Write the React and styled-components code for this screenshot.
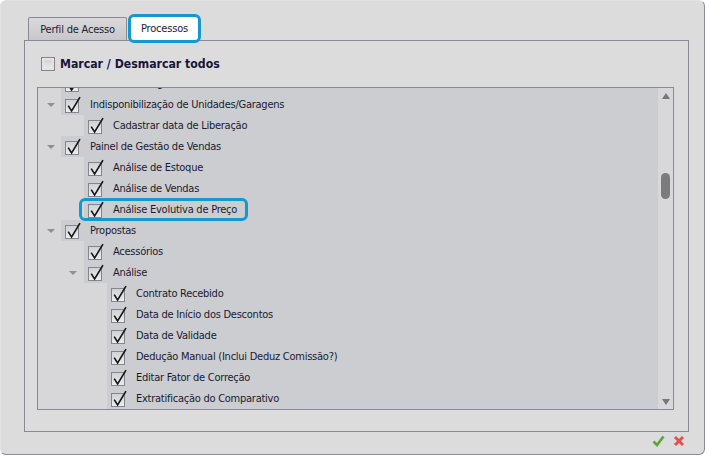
import React from "react";
import styled, { createGlobalStyle, css } from "styled-components";

const GlobalStyle = createGlobalStyle`
  body {
    margin: 0;
    background: #fff;
    font-family: "DejaVu Sans Condensed", "DejaVu Sans", sans-serif;
  }
`;

const Window = styled.div`
  box-sizing: border-box;
  width: 705px;
  height: 455px;
  display: flex;
  flex-direction: column;
  padding: 0 16px 0 23px;
  background: #dcdcdc;
  border-radius: 6px;
  border: 1px solid #e2e2e2;
  border-right-color: #8b8b98;
  border-bottom-color: #8b8b98;
`;

const TabBar = styled.div`
  display: flex;
  align-items: flex-start;
  gap: 1px;
  height: 23px;
  margin-top: 16px;
  padding-left: 4px;
`;

const Tab = styled.div`
  box-sizing: border-box;
  display: flex;
  align-items: center;
  justify-content: center;
  font-size: 11px;
  letter-spacing: -0.2px;
  color: #1c1c33;
  ${(p) =>
    p.$active
      ? css`
          position: relative;
          z-index: 2;
          margin-top: -3px;
          width: 73px;
          height: 29px;
          background: #fff;
          border: 3px solid #1697cf;
          border-radius: 6px;
        `
      : css`
          width: 99px;
          height: 23px;
          padding-top: 1px;
          background: linear-gradient(#d9d9db, #c8c8cb);
          border: 1px solid #8a8a97;
          border-bottom: none;
          border-radius: 2px 2px 0 0;
        `}
`;

const Panel = styled.div`
  box-sizing: border-box;
  width: 665px;
  height: 392px;
  display: flex;
  flex-direction: column;
  padding: 0 14px 21px 12px;
  border: 1px solid #8a8a97;
`;

const Header = styled.label`
  height: 46px;
  display: flex;
  align-items: center;
  gap: 5px;
  padding-left: 4px;
  font-weight: bold;
  font-size: 12.2px;
  color: #16163a;
`;

const BoxIcon = styled.span`
  box-sizing: border-box;
  width: 14px;
  height: 14px;
  border: 1px solid #85858f;
  background: linear-gradient(#cfcfd2, #ededee);
  box-shadow: inset 0 0 0 2px #e4e4e6;
`;

const TreeBox = styled.div`
  flex: 1;
  display: flex;
  border: 1px solid #8a8a97;
  background: #cccdd0;
  overflow: hidden;
`;

const List = styled.div`
  flex: 1;
  margin-top: -15px;
`;

const Row = styled.div`
  display: flex;
  height: 21px;
`;

const Indent = styled.div`
  flex: none;
  width: ${(p) => p.$level * 23 + 23}px;
  background: #d7d7d9;
  display: flex;
  justify-content: flex-end;
  align-items: center;
`;

const Arrow = styled.span`
  width: 23px;
  display: flex;
  justify-content: center;
  padding-left: 2px;
  &::before {
    content: "";
    border-left: 4px solid transparent;
    border-right: 4px solid transparent;
    border-top: 4px solid #8e8e96;
  }
`;

const Cell = styled.div`
  flex: 1;
  display: flex;
  align-items: center;
  padding-left: 4px;
`;

const Label = styled.span`
  position: relative;
  height: 21px;
  display: inline-flex;
  align-items: center;
  gap: 9px;
  font-size: 11px;
  letter-spacing: -0.25px;
  color: #1a1a30;
  white-space: nowrap;
  ${(p) =>
    p.$highlight &&
    css`
      &::after {
        content: "";
        position: absolute;
        inset: -1px -11px -1px -9px;
        border: 3px solid #1697cf;
        border-radius: 6px;
      }
    `}
`;

const ScrollBar = styled.div`
  flex: none;
  width: 15px;
  background: #d8d8da;
  display: flex;
  flex-direction: column;
  align-items: center;
  padding: 5px 0 4px;
  box-sizing: border-box;
`;

const ScrollArrow = styled.span`
  border-left: 4.5px solid transparent;
  border-right: 4.5px solid transparent;
  ${(p) =>
    p.$down
      ? css`
          border-top: 6px solid #777;
          margin-top: auto;
        `
      : css`
          border-bottom: 6px solid #777;
        `}
`;

const Thumb = styled.span`
  width: 9px;
  height: 26px;
  margin-top: 74px;
  border-radius: 5px;
  background: #7b7b7e;
`;

const Footer = styled.div`
  width: 665px;
  display: flex;
  justify-content: flex-end;
  gap: 8px;
  padding: 3px 4px 0 0;
  box-sizing: border-box;
`;

function Check() {
  return (
    <svg width="16" height="18" viewBox="0 0 16 18">
      <defs>
        <linearGradient id="cb" x1="0" y1="0" x2="0" y2="1">
          <stop offset="0" stopColor="#cfd0d3" />
          <stop offset="1" stopColor="#eeeeef" />
        </linearGradient>
      </defs>
      <rect x="0.5" y="3.5" width="13" height="13" fill="url(#cb)" stroke="#85858f" />
      <path d="M3.2 9.6 L6.6 15 L15 1.2" fill="none" stroke="#151515" strokeWidth="1.6" />
    </svg>
  );
}

const items = [
  { level: 0, label: "Reserva de Vagas", open: true },
  { level: 0, label: "Indisponibilização de Unidades/Garagens", open: true },
  { level: 1, label: "Cadastrar data de Liberação" },
  { level: 0, label: "Painel de Gestão de Vendas", open: true },
  { level: 1, label: "Análise de Estoque" },
  { level: 1, label: "Análise de Vendas" },
  { level: 1, label: "Análise Evolutiva de Preço", highlight: true },
  { level: 0, label: "Propostas", open: true },
  { level: 1, label: "Acessórios" },
  { level: 1, label: "Análise", open: true },
  { level: 2, label: "Contrato Recebido" },
  { level: 2, label: "Data de Início dos Descontos" },
  { level: 2, label: "Data de Validade" },
  { level: 2, label: "Dedução Manual (Inclui Deduz Comissão?)" },
  { level: 2, label: "Editar Fator de Correção" },
  { level: 2, label: "Extratificação do Comparativo" },
];

export default function App() {
  return (
    <>
      <GlobalStyle />
      <Window>
        <TabBar>
          <Tab>Perfil de Acesso</Tab>
          <Tab $active>Processos</Tab>
        </TabBar>
        <Panel>
          <Header>
            <BoxIcon />
            Marcar / Desmarcar todos
          </Header>
          <TreeBox>
            <List>
              {items.map((it, i) => (
                <Row key={i}>
                  <Indent $level={it.level}>
                    {it.open && <Arrow />}
                  </Indent>
                  <Cell>
                    <Label $highlight={it.highlight}>
                      <Check />
                      {it.label}
                    </Label>
                  </Cell>
                </Row>
              ))}
            </List>
            <ScrollBar>
              <ScrollArrow />
              <Thumb />
              <ScrollArrow $down />
            </ScrollBar>
          </TreeBox>
        </Panel>
        <Footer>
          <svg width="13" height="12" viewBox="0 0 13 12">
            <path d="M1.5 6.5 L5 10 L11.5 1.5" fill="none" stroke="#5aa636" strokeWidth="2.6" />
          </svg>
          <svg width="12" height="12" viewBox="0 0 12 12">
            <path d="M2 2 L10 10 M10 2 L2 10" fill="none" stroke="#e25050" strokeWidth="3" />
          </svg>
        </Footer>
      </Window>
    </>
  );
}
